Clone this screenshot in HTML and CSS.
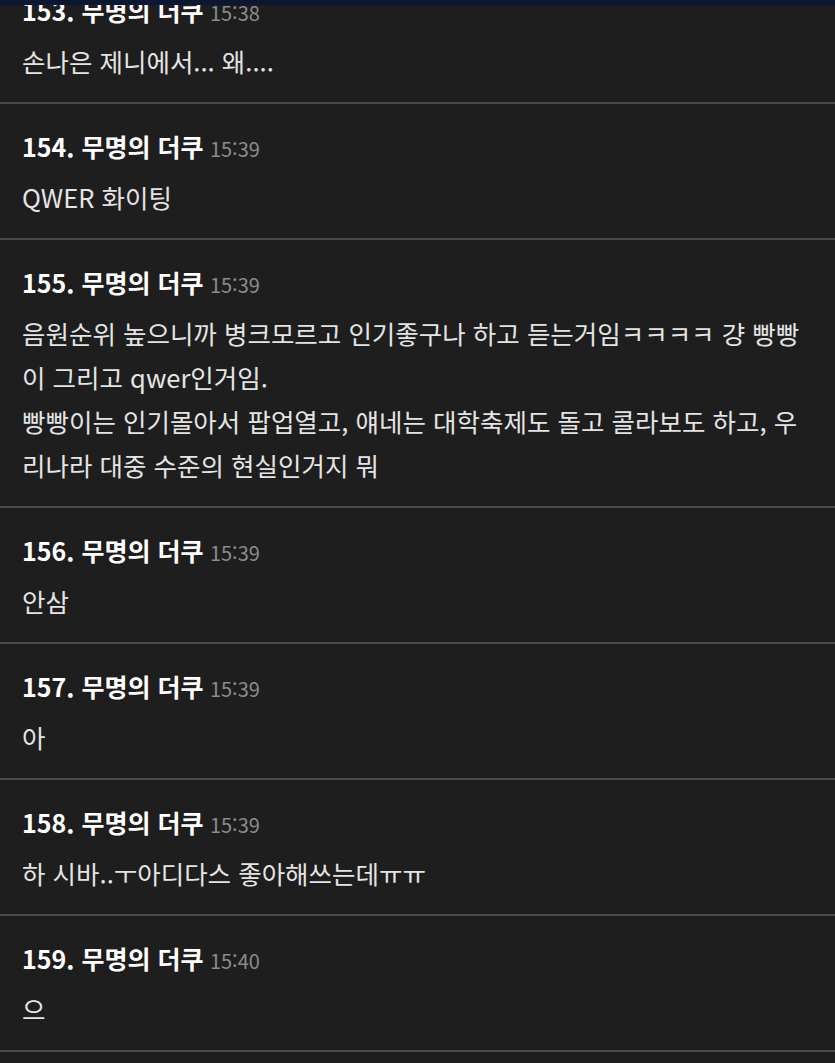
FILE: index.html
```html
<!DOCTYPE html>
<html lang="ko">

<head>
    <meta charset="UTF-8">
    <meta name="viewport" content="width=device-width, initial-scale=1.0">
    <title>댓글</title>
    <link rel="stylesheet" href="styles.css">
</head>

<body>
    <div class="top-bar"></div>
    <ul class="comment-list">
        <li class="comment">
            <div class="comment-head"><span class="comment-name">153. 무명의 더쿠</span> <span class="comment-time">15:38</span></div>
            <div class="comment-body">손나은 제니에서... 왜....</div>
        </li>
        <li class="comment">
            <div class="comment-head"><span class="comment-name">154. 무명의 더쿠</span> <span class="comment-time">15:39</span></div>
            <div class="comment-body">QWER 화이팅</div>
        </li>
        <li class="comment">
            <div class="comment-head"><span class="comment-name">155. 무명의 더쿠</span> <span class="comment-time">15:39</span></div>
            <div class="comment-body">음원순위 높으니까 병크모르고 인기좋구나 하고 듣는거임ㅋㅋㅋㅋ 걍 빵빵이 그리고 qwer인거임.<br>빵빵이는 인기몰아서 팝업열고, 얘네는 대학축제도 돌고 콜라보도 하고, 우리나라 대중 수준의 현실인거지 뭐</div>
        </li>
        <li class="comment">
            <div class="comment-head"><span class="comment-name">156. 무명의 더쿠</span> <span class="comment-time">15:39</span></div>
            <div class="comment-body">안삼</div>
        </li>
        <li class="comment">
            <div class="comment-head"><span class="comment-name">157. 무명의 더쿠</span> <span class="comment-time">15:39</span></div>
            <div class="comment-body">아</div>
        </li>
        <li class="comment">
            <div class="comment-head"><span class="comment-name">158. 무명의 더쿠</span> <span class="comment-time">15:39</span></div>
            <div class="comment-body">하 시바..ㅜ아디다스 좋아해쓰는데ㅠㅠ</div>
        </li>
        <li class="comment">
            <div class="comment-head"><span class="comment-name">159. 무명의 더쿠</span> <span class="comment-time">15:40</span></div>
            <div class="comment-body">으</div>
        </li>
    </ul>
</body>

</html>
```

FILE: styles.css
```css
body {
    margin: 0;
    background-color: #1e1e1e;
    font-family: "Noto Sans CJK KR", "Noto Sans", sans-serif;
    overflow: hidden;
}

.top-bar {
    position: fixed;
    top: 0;
    left: 0;
    right: 0;
    height: 5px;
    background-color: #0b1733;
}

.comment-list {
    list-style: none;
    margin: -32px 0 0 0;
    padding: 0;
}

.comment {
    padding: 24px 22px 19px 22px;
    border-bottom: 2px solid #4a4a4a;
}

.comment-head {
    height: 36px;
    line-height: 36px;
    margin-bottom: 11px;
    white-space: nowrap;
}

.comment-name {
    font-size: 25px;
    font-weight: bold;
    color: #ffffff;
}

.comment-time {
    font-size: 20px;
    color: #8a8a8a;
    margin-left: 2px;
}

.comment-body {
    font-size: 25.5px;
    line-height: 44px;
    color: #e4e4e4;
}
```
